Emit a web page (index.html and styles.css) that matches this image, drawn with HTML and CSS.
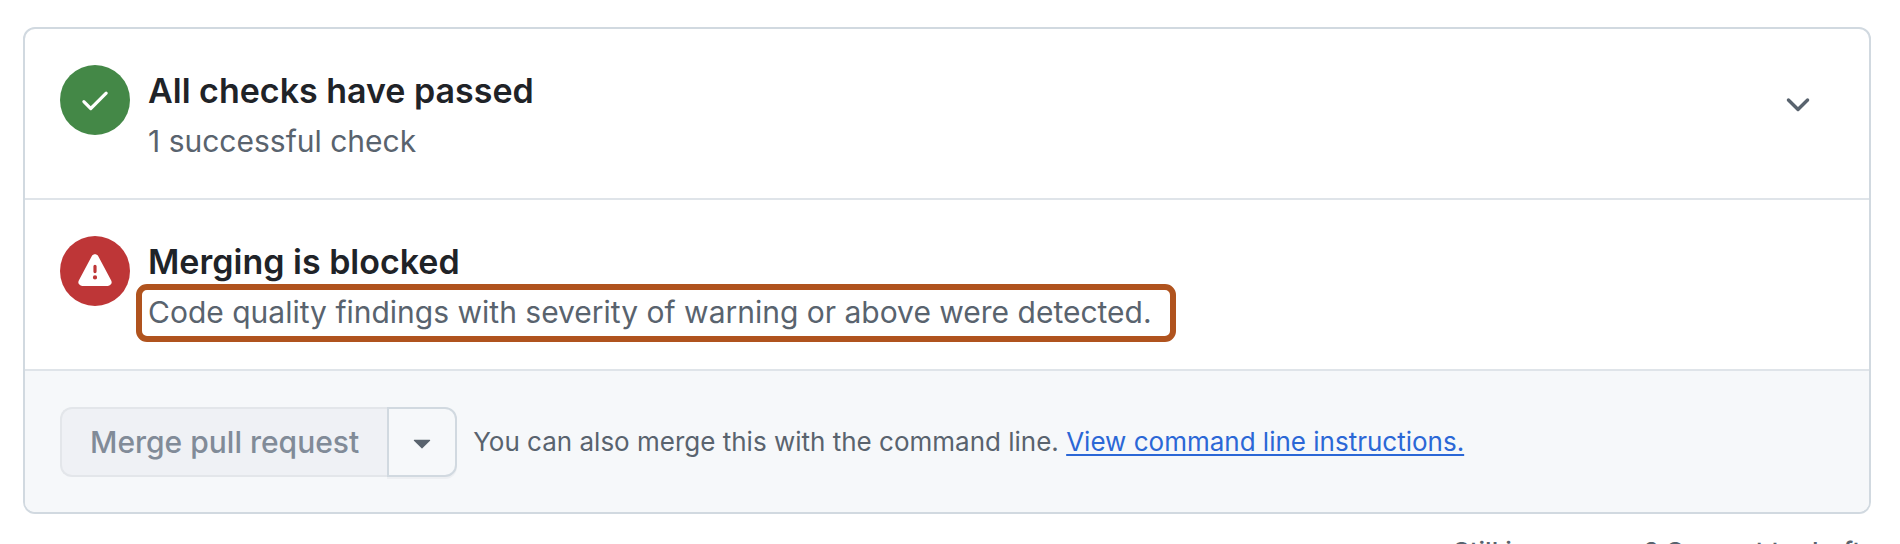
FILE: index.html
```html
<!DOCTYPE html>
<html lang="en">
<head>
<meta charset="utf-8">
<meta name="viewport" content="width=device-width, initial-scale=1">
<title>Merge status</title>
<link rel="stylesheet" href="styles.css">
</head>
<body>
<main class="page">
  <article class="merge-box">
    <section class="status">
      <span class="badge badge-success">
        <svg class="badge-icon" viewBox="0 0 16 16" aria-hidden="true"><path fill="currentColor" d="M13.78 4.22a.75.75 0 0 1 0 1.06l-7.25 7.25a.75.75 0 0 1-1.06 0L2.22 9.28a.751.751 0 0 1 .018-1.042.751.751 0 0 1 1.042-.018L6 10.94l6.72-6.72a.75.75 0 0 1 1.06 0Z"/></svg>
      </span>
      <div class="status-text">
        <h2 class="title">All checks have passed</h2>
        <p class="subtitle">1 successful check</p>
      </div>
      <button class="expand" type="button" aria-label="Expand checks">
        <svg class="expand-icon" viewBox="0 0 16 16" aria-hidden="true"><path fill="currentColor" d="M12.78 5.22a.749.749 0 0 1 0 1.06l-4.25 4.25a.749.749 0 0 1-1.06 0L3.22 6.28a.749.749 0 1 1 1.06-1.06L8 8.939l3.72-3.719a.749.749 0 0 1 1.06 0Z"/></svg>
      </button>
    </section>
    <section class="status">
      <span class="badge badge-danger">
        <svg class="badge-icon" viewBox="0 0 16 16" aria-hidden="true"><path fill="currentColor" d="M6.457 1.047c.659-1.234 2.427-1.234 3.086 0l6.082 11.378A1.75 1.75 0 0 1 14.082 15H1.918a1.75 1.75 0 0 1-1.543-2.575ZM9 11a1 1 0 1 0-2 0 1 1 0 0 0 2 0Zm-.25-5.25a.75.75 0 0 0-1.5 0v2.5a.75.75 0 0 0 1.5 0Z"/></svg>
      </span>
      <div class="status-text">
        <h2 class="title">Merging is blocked</h2>
        <p class="subtitle highlighted">Code quality findings with severity of warning or above were detected.</p>
      </div>
    </section>
    <footer class="actions">
      <div class="button-group">
        <button class="merge" type="button" disabled>Merge pull request</button>
        <button class="merge-menu" type="button" aria-label="Select merge method">
          <svg class="menu-icon" viewBox="0 0 16 16" aria-hidden="true"><path fill="currentColor" d="m4.427 7.427 3.396 3.396a.25.25 0 0 0 .354 0l3.396-3.396A.25.25 0 0 0 11.396 7H4.604a.25.25 0 0 0-.177.427Z"/></svg>
        </button>
      </div>
      <p class="hint">You can also merge this with the command line. <a class="link" href="#instructions">View command line instructions.</a></p>
    </footer>
  </article>
  <p class="draft-note">Still in progress? Convert to draft</p>
</main>
</body>
</html>
```
FILE: styles.css
```css
* {
  box-sizing: border-box;
}

body {
  margin: 0;
  height: 100vh;
  overflow: hidden;
  background: #ffffff;
  color: #1f2328;
  font-family: Inter, "Liberation Sans", sans-serif;
}

h2,
p {
  margin: 0;
}

.page {
  padding: 27px 29px 0 23px;
}

.merge-box {
  border: 2px solid #d1d9e0;
  border-radius: 12px;
  overflow: hidden;
}

.status {
  display: flex;
  align-items: flex-start;
  gap: 18px;
  padding: 36px 35px 33px;
  border-bottom: 2px solid #dfe4e9;
}

.badge {
  display: flex;
  flex: none;
  align-items: center;
  justify-content: center;
  width: 70px;
  height: 70px;
  border-radius: 50%;
  color: #ffffff;
}

.badge-success {
  background: #448847;
}

.badge-danger {
  background: #be3637;
}

.badge-icon {
  width: 34px;
  height: 34px;
}

.status-text {
  flex: 1;
  min-width: 0;
}

.title {
  font-size: 34px;
  font-weight: 600;
  line-height: 52px;
}

.subtitle {
  width: fit-content;
  color: #59636e;
  font-size: 30px;
  line-height: 48px;
}

.highlighted {
  position: relative;
}

.highlighted::after {
  content: "";
  position: absolute;
  inset: -4px -24px -6px -12px;
  border: 6px solid #b0531e;
  border-radius: 11px;
}

.expand {
  display: flex;
  align-items: center;
  justify-content: center;
  width: 72px;
  height: 80px;
  padding: 0;
  border: 0;
  background: transparent;
  color: #59636e;
}

.expand-icon,
.menu-icon {
  width: 36px;
  height: 36px;
}

.actions {
  display: flex;
  align-items: center;
  gap: 16px;
  padding: 36px 35px 35px;
  background: #f6f8fa;
}

.button-group {
  display: flex;
  flex: none;
}

.merge,
.merge-menu {
  height: 70px;
  font-family: inherit;
}

.merge {
  padding: 0 28px;
  border: 2px solid #e3e6ea;
  border-right: 0;
  border-radius: 12px 0 0 12px;
  background: #eff1f5;
  color: #818b98;
  font-size: 30px;
  font-weight: 500;
}

.merge-menu {
  display: flex;
  align-items: center;
  justify-content: center;
  width: 70px;
  padding: 0;
  border: 2px solid #d1d9e0;
  border-radius: 0 12px 12px 0;
  background: #f6f8fa;
  box-shadow: 0 2px 0 rgba(31, 35, 40, 0.04);
  color: #59636e;
}

.hint {
  color: #59636e;
  font-size: 26px;
  line-height: 40px;
}

.link {
  color: #2b67d6;
  text-decoration: underline;
  text-decoration-thickness: 2px;
  text-underline-offset: 3px;
}

.draft-note {
  padding: 20px 10px 0 0;
  color: #59636e;
  font-size: 26px;
  font-weight: 500;
  line-height: 36px;
  text-align: right;
}
```
